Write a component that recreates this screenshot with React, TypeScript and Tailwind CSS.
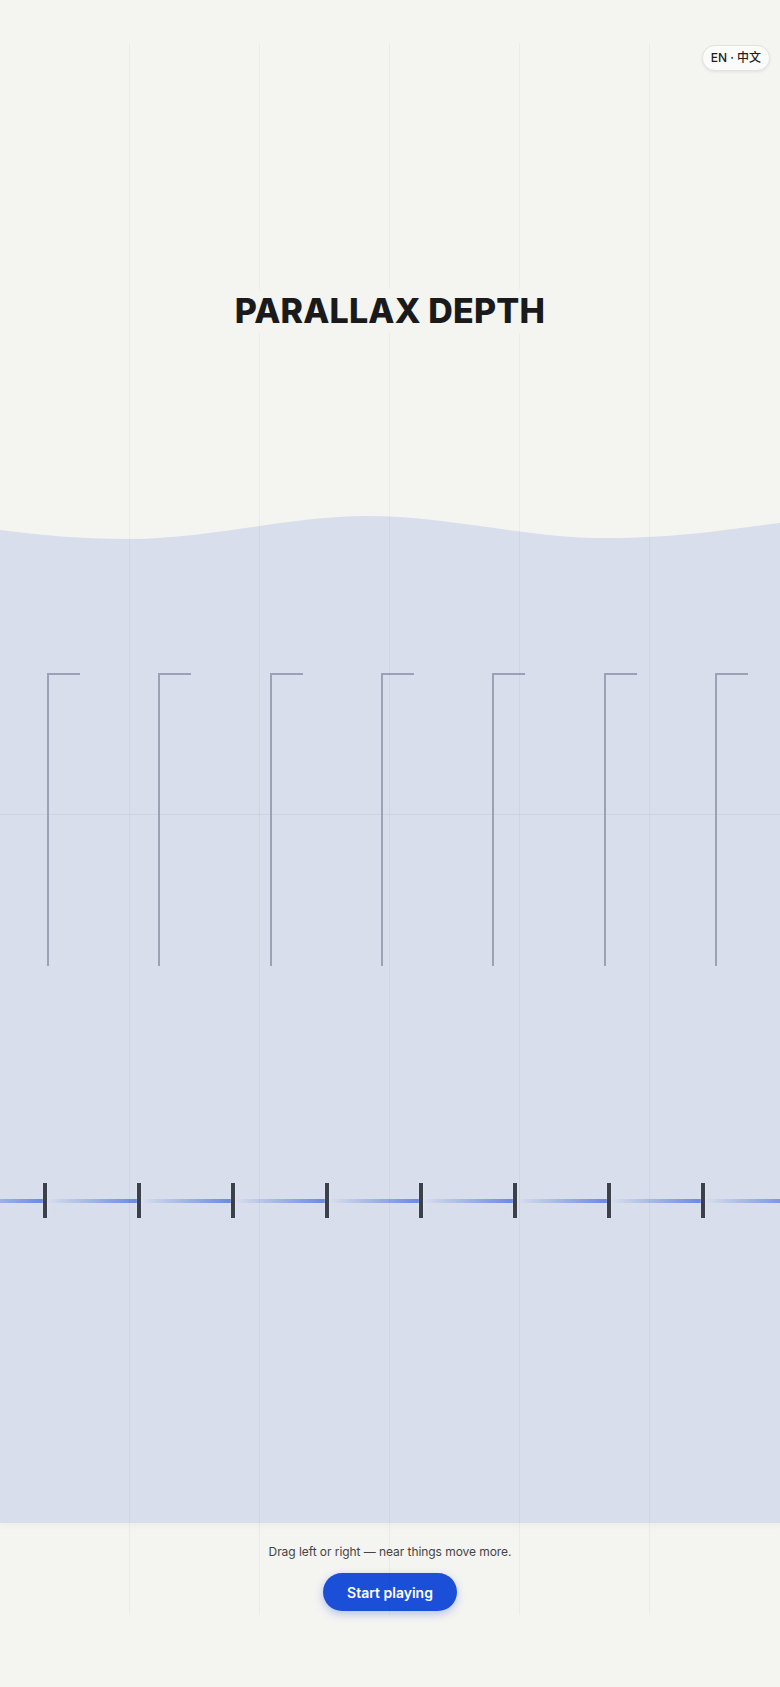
const POLES = [0, 1, 2, 3, 4, 5, 6];
const TICKS = [0, 1, 2, 3, 4, 5, 6, 7];

function Segment() {
  return <div className="h-[4px] w-[90px] shrink-0 bg-gradient-to-r from-[#6b8cde]/0 to-[#6a8ade]" />;
}

function Tick() {
  return <div className="h-[35px] w-[4px] shrink-0 bg-[#3c404b] shadow-[0_0_2px_rgba(255,255,255,0.6)]" />;
}

export default function App() {
  return (
    <div className="relative flex min-h-[1687px] w-full flex-col overflow-hidden bg-[#f4f4f1] font-['Inter','Noto_Sans_CJK_SC',sans-serif] text-[#1a1a1a]">
      {/* faint column guides */}
      <div className="pointer-events-none absolute inset-x-0 top-[43px] bottom-[72px] z-10 grid grid-cols-6">
        <div className="border-r border-black/[0.035]" />
        <div className="border-r border-black/[0.035]" />
        <div className="border-r border-black/[0.035]" />
        <div className="border-r border-black/[0.035]" />
        <div className="border-r border-black/[0.035]" />
        <div />
      </div>

      <button className="absolute right-[10px] top-[45px] z-30 flex h-[26px] items-center rounded-full border border-[#e4e4df] bg-[#fbfbf9] px-[8px] text-[12px] font-medium text-[#1f1f1f] shadow-[0_1px_3px_rgba(0,0,0,0.08)]">
        EN · 中文
      </button>

      <header className="flex h-[516px] shrink-0 justify-center pt-[289px]">
        <h1 className="relative z-20 h-fit bg-[#f4f4f1] text-[34px] font-extrabold leading-[44px] tracking-[0.005em]">
          PARALLAX DEPTH
        </h1>
      </header>

      <section className="flex shrink-0 flex-col">
        <svg viewBox="0 0 780 25" preserveAspectRatio="none" className="block h-[25px] w-full">
          <path
            d="M0 14 C40 19 80 23 130 23 C210 23 290 0 366 0 C450 0 525 22 605 22 C680 22 730 13 780 7 L780 25 L0 25 Z"
            fill="#d8deec"
          />
        </svg>
        <div className="relative -mt-px flex h-[983px] flex-col overflow-hidden bg-[#d8deec] shadow-[0_3px_6px_rgba(0,0,0,0.03)]">
          {/* horizon */}
          <div className="absolute inset-x-0 top-[274px] h-px bg-[#cdd3e0]" />

          {/* far layer */}
          <div className="relative flex pl-[47px] pt-[133px]">
            {POLES.map((p) => (
              <div key={p} className="w-[111.33px] shrink-0">
                <div className="h-[293px] w-[33px] border-l-2 border-t-2 border-[#9aa2b4]" />
              </div>
            ))}
          </div>

          {/* near layer */}
          <div className="mt-[217px] ml-[-47px] flex items-center">
            <Segment />
            {TICKS.map((t) => (
              <div key={t} className="flex shrink-0 items-center">
                <Tick />
                <Segment />
              </div>
            ))}
          </div>
        </div>
      </section>

      <footer className="flex flex-col items-center pt-[19px]">
        <p className="text-[12px] leading-[20px] tracking-[-0.005em] text-[#454545]">
          Drag left or right — near things move more.
        </p>
        <button className="mt-[11px] h-[38px] rounded-full bg-[#1c4fd8] px-6 text-[14px] font-semibold text-white shadow-[0_3px_8px_rgba(28,79,216,0.3)]">
          Start playing
        </button>
      </footer>
    </div>
  );
}
